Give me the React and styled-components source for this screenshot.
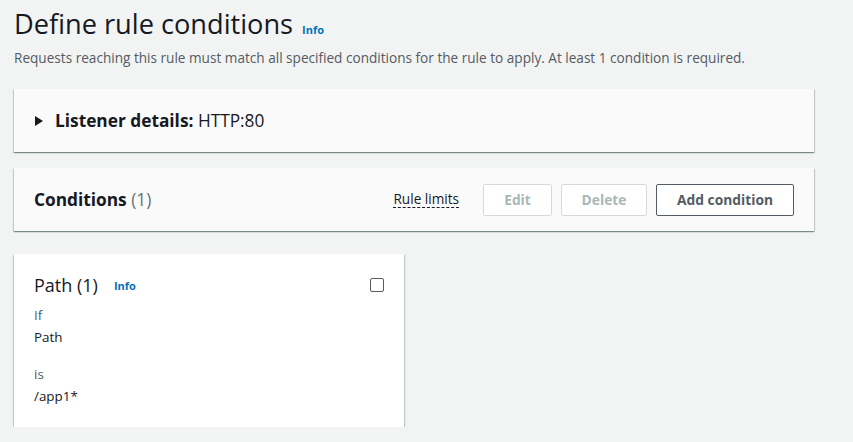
import React from "react";
import styled, { createGlobalStyle } from "styled-components";

const Global = createGlobalStyle`
  html, body { margin: 0; padding: 0; background: #f2f3f3; }
  body { font-family: "Open Sans", "Noto Sans", sans-serif; color: #16191f; }
`;

const Page = styled.div`
  padding: 0 39px 0 14px;
  width: 800px;
`;

const Header = styled.div`
  padding-top: 4px;
`;

const TitleRow = styled.div`
  display: flex;
  align-items: baseline;
  gap: 9px;
`;

const Title = styled.h1`
  margin: 0;
  font-size: 27.2px;
  line-height: 40px;
  font-weight: 400;
  color: #16191f;
`;

const InfoLink = styled.a`
  font-size: 11px;
  font-weight: 700;
  color: #0073bb;
  text-decoration: none;
`;

const Description = styled.p`
  margin: 4px 0 0;
  font-size: 13.6px;
  line-height: 20px;
  color: #545b64;
`;

const Panel = styled.div`
  background: ${(p) => (p.$white ? "#ffffff" : "#fafafa")};
  width: ${(p) => p.$width || "800px"};
  box-shadow: 0 1px 1px 0 rgba(0, 28, 36, 0.3), 1px 1px 1px 0 rgba(0, 28, 36, 0.15),
    -1px 1px 1px 0 rgba(0, 28, 36, 0.15);
  margin-top: ${(p) => p.$mt || "16px"};
`;

const PanelHeader = styled.div`
  display: flex;
  align-items: center;
  height: 63px;
  padding: 0 20px;
  box-sizing: border-box;
`;

const Caret = styled.span`
  width: 0;
  height: 0;
  border-top: 5px solid transparent;
  border-bottom: 5px solid transparent;
  border-left: 8px solid #16191f;
  margin: 0 12px 0 1px;
`;

const PanelTitle = styled.h2`
  margin: 0;
  font-size: 17.3px;
  font-weight: 700;
  color: #16191f;
  flex: 1;
`;

const Plain = styled.span`
  font-weight: 400;
  color: ${(p) => (p.$muted ? "#687078" : "#16191f")};
`;

const Actions = styled.div`
  display: flex;
  align-items: center;
  gap: 9px;
`;

const RuleLimits = styled.span`
  font-size: 13.6px;
  color: #16191f;
  border-bottom: 1px dashed #16191f;
  line-height: 16px;
  margin-right: 15px;
`;

const Button = styled.button`
  font-family: inherit;
  font-size: 13.8px;
  font-weight: 700;
  height: 32px;
  padding: 0;
  border-radius: 2px;
  background: #ffffff;
  border: 1px solid ${(p) => (p.disabled ? "#d5dbdb" : "#545b64")};
  color: ${(p) => (p.disabled ? "#aab7b8" : "#545b64")};
  box-sizing: border-box;
  width: ${(p) => p.$w};
`;

const CardBody = styled.div`
  padding: 20px 20px 20px;
`;

const CardTitleRow = styled.div`
  display: flex;
  align-items: center;
  gap: 16px;
  height: 22px;
`;

const CardTitle = styled.h3`
  margin: 0;
  font-size: 18px;
  font-weight: 400;
  flex: none;
`;

const Checkbox = styled.span`
  margin-left: auto;
  width: 12px;
  height: 12px;
  border: 1px solid #545b64;
  border-radius: 2px;
`;

const Label = styled.div`
  font-size: 13.4px;
  color: #545b64;
  line-height: 22px;
  margin-top: ${(p) => p.$mt || "0"};
`;

const Value = styled.div`
  font-size: 13.4px;
  color: #16191f;
  line-height: 22px;
`;

export default function App() {
  return (
    <>
      <Global />
      <Page>
        <Header>
          <TitleRow>
            <Title>Define rule conditions</Title>
            <InfoLink>Info</InfoLink>
          </TitleRow>
          <Description>
            Requests reaching this rule must match all specified conditions for the rule to apply. At least 1 condition is required.
          </Description>
        </Header>
        <Panel $mt="21px">
          <PanelHeader>
            <Caret />
            <PanelTitle>
              Listener details: <Plain>HTTP:80</Plain>
            </PanelTitle>
          </PanelHeader>
        </Panel>
        <Panel>
          <PanelHeader>
            <PanelTitle>
              Conditions <Plain $muted>(1)</Plain>
            </PanelTitle>
            <Actions>
              <RuleLimits>Rule limits</RuleLimits>
              <Button disabled $w="69px">Edit</Button>
              <Button disabled $w="86px">Delete</Button>
              <Button $w="138px">Add condition</Button>
            </Actions>
          </PanelHeader>
        </Panel>
        <Panel $white $width="390px" $mt="23px">
          <CardBody>
            <CardTitleRow>
              <CardTitle>Path (1)</CardTitle>
              <InfoLink>Info</InfoLink>
              <Checkbox />
            </CardTitleRow>
            <Label $mt="8px">If</Label>
            <Value>Path</Value>
            <Label $mt="15px">is</Label>
            <Value>/app1*</Value>
          </CardBody>
        </Panel>
      </Page>
    </>
  );
}
